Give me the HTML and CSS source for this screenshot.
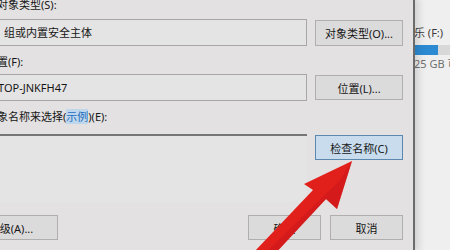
FILE: index.html
```html
<!DOCTYPE html>
<html lang="zh-CN">
<head>
<meta charset="utf-8">
<title>选择用户或组</title>
<link rel="stylesheet" href="styles.css">
</head>
<body>
<div class="screen">
  <div class="dialog">
    <div class="label">选择此对象类型(S):</div>
    <div class="row r1">
      <div class="field">用户、组或内置安全主体</div>
      <div class="btn">对象类型(O)...</div>
    </div>
    <div class="label gap-label">查找位置(F):</div>
    <div class="row r2">
      <div class="field">DESKTOP-JNKFH47</div>
      <div class="btn">位置(L)...</div>
    </div>
    <div class="label gap-label">输入对象名称来选择(<span class="link">示例</span>)(E):</div>
    <div class="row r3">
      <div class="area"></div>
      <div class="btn primary">检查名称(C)</div>
    </div>
    <div class="footer">
      <div class="btn adv">高级(A)...</div>
      <div class="spacer"></div>
      <div class="btn small">确定</div>
      <div class="btn small">取消</div>
    </div>
  </div>
  <div class="side">
    <div class="drive-name">娱乐 (F:)</div>
    <div class="bar"><div class="fill"></div></div>
    <div class="drive-free">25 GB 可用</div>
  </div>
  <svg class="arrow" viewBox="0 0 450 250" width="450" height="250">
    <polygon points="352,161 337,209 326,199 271,258 255,251 313,190 304,184" fill="#e2201b"/>
    <polygon points="352,161 337,209 326,199 271,258 263,255 340,180" fill="#c9161a" opacity="0.55"/>
  </svg>
</div>
</body>
</html>
```

FILE: styles.css
```css
html, body {
  margin: 0;
  padding: 0;
}
body {
  width: 450px;
  height: 250px;
  overflow: hidden;
  background: #efefef;
  font-family: "Noto Sans", "Noto Sans CJK SC", sans-serif;
  font-size: 11px;
  color: #161616;
}
.screen {
  position: relative;
  display: flex;
  width: 450px;
  height: 250px;
  overflow: hidden;
}
.dialog {
  position: relative;
  z-index: 1;
  flex: 0 0 auto;
  box-sizing: border-box;
  width: 451px;
  height: 254px;
  margin-left: -36px;
  margin-top: -2px;
  padding-right: 10px;
  border-right: 2px solid #6b6b6b;
  background: #e3e1e1;
  box-shadow: 4px 0 7px rgba(0, 0, 0, 0.12);
  display: flex;
  flex-direction: column;
}
.label {
  height: 14px;
  line-height: 14px;
  white-space: nowrap;
}
.gap-label {
  margin-top: 9px;
}
.row {
  display: flex;
  gap: 8px;
  align-items: flex-start;
}
.r1 { margin-top: 7px; }
.r2 { margin-top: 5px; }
.r3 { margin-top: 10px; }
.field {
  flex: 1;
  box-sizing: border-box;
  height: 27px;
  line-height: 25px;
  padding-left: 6px;
  border: 1px solid #a7a6a6;
  background: #e5e4e4;
  white-space: nowrap;
  overflow: hidden;
}
.area {
  flex: 1;
  box-sizing: border-box;
  height: 68px;
  border-top: 2px solid #767676;
  background: #e4e4e4;
}
.btn {
  flex: 0 0 auto;
  box-sizing: border-box;
  width: 88px;
  height: 26px;
  margin-top: 1px;
  border: 1px solid #b0aeae;
  background: #dcdbdb;
  display: flex;
  align-items: center;
  justify-content: center;
  white-space: nowrap;
}
.r2 .btn,
.r3 .btn {
  height: 25px;
}
.primary {
  background: #c8dced;
  border-color: #5c88b0;
}
.link {
  color: #1f6dbd;
  background: #bed7ec;
}
.footer {
  display: flex;
  gap: 9px;
  margin-top: 13px;
  height: 25px;
}
.footer .btn {
  height: 25px;
  margin-top: 0;
}
.adv {
  width: 94px;
}
.spacer {
  flex: 1;
}
.small {
  width: 73px;
}
.side {
  flex: 1;
  position: relative;
  overflow: hidden;
  background: #efefef;
  color: #3a3a3a;
}
.drive-name {
  margin-top: 26px;
  margin-left: -12px;
  height: 14px;
  line-height: 14px;
  white-space: nowrap;
}
.bar {
  margin-top: 5px;
  margin-left: -4px;
  height: 10px;
  width: 60px;
  background: #d8d8d8;
}
.fill {
  width: 27px;
  height: 10px;
  background: #2c8ad3;
}
.drive-free {
  margin-top: 2px;
  margin-left: -1px;
  height: 13px;
  line-height: 13px;
  color: #707070;
  white-space: nowrap;
}
.arrow {
  position: absolute;
  left: 0;
  top: 0;
  z-index: 2;
  pointer-events: none;
}
```
